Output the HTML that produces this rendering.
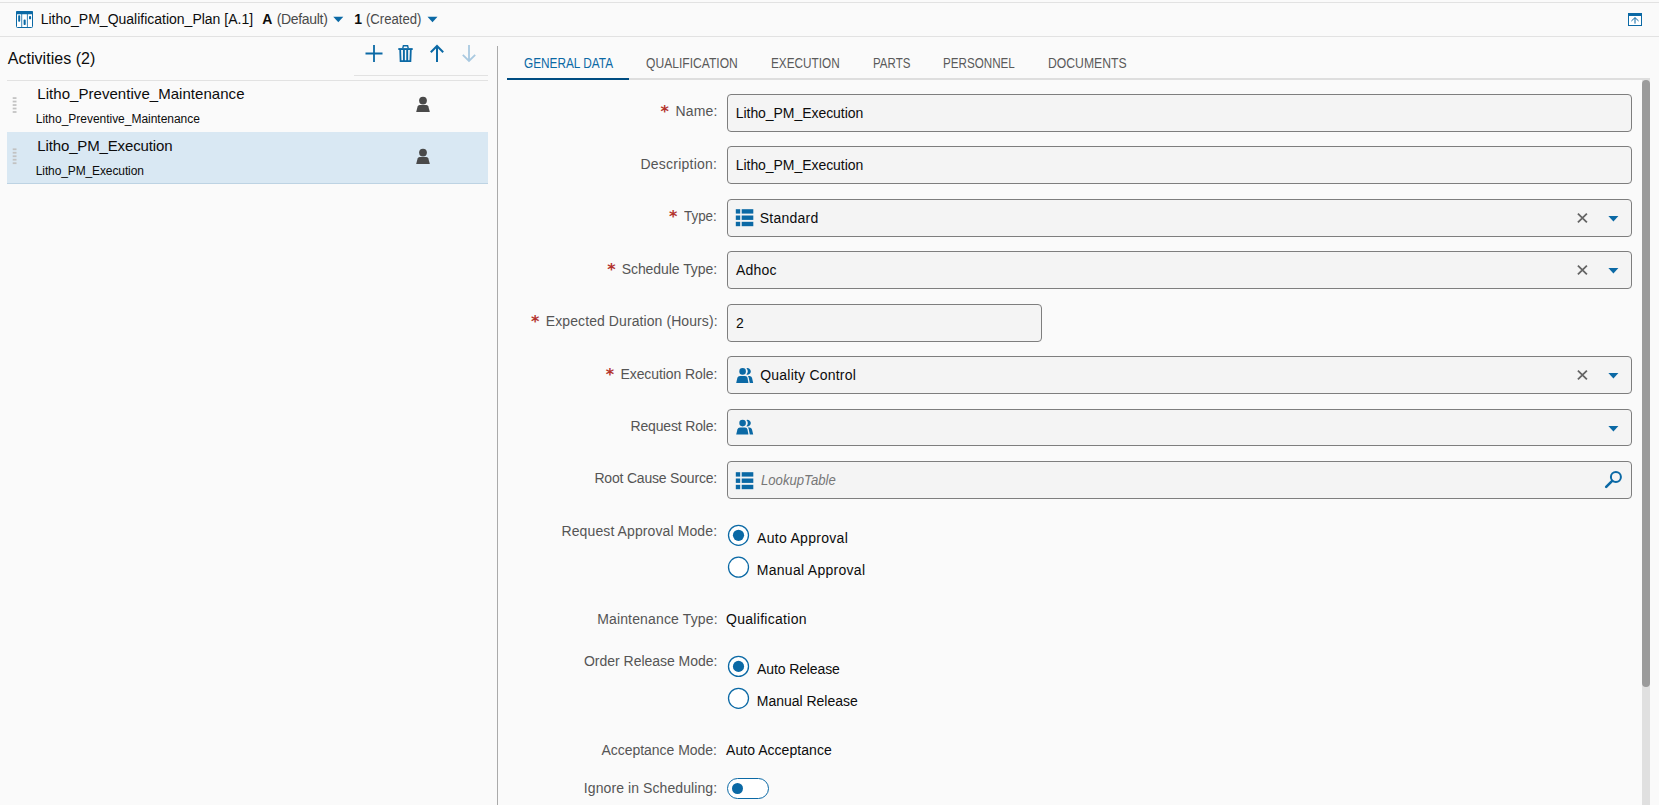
<!DOCTYPE html>
<html lang="en"><head><meta charset="utf-8"><title>Litho_PM_Qualification_Plan</title>
<style>
html,body{margin:0;padding:0;}
body{width:1659px;height:805px;overflow:hidden;background:#fafafa;position:relative;font-family:"Liberation Sans", sans-serif;}
.t{position:absolute;white-space:nowrap;line-height:20px;transform-origin:0 50%;}
.a{position:absolute;}
.in{position:absolute;box-sizing:border-box;height:38px;border:1px solid #7e7e7e;border-radius:4px;background:#f4f4f4;}
svg{position:absolute;overflow:visible;}
</style></head>
<body>
<div class="a" style="left:0;top:2px;width:1659px;height:1px;background:#e2e2e2"></div>
<div class="a" style="left:0;top:36px;width:1659px;height:1px;background:#e2e2e2"></div>
<svg style="left:16px;top:11px" width="17" height="17" viewBox="0.000 0.000 17.000 17.000">
<rect x="0.5" y="0.5" width="16" height="16" rx="1" fill="#fff" stroke="#0b69a5" stroke-width="1"/>
<rect x="0" y="0" width="17" height="3.2" rx="1" fill="#0b69a5"/>
<rect x="5.2" y="3" width="1" height="13.5" fill="#0b69a5" opacity=".8"/>
<rect x="10.9" y="3" width="1" height="13.5" fill="#0b69a5" opacity=".8"/>
<rect x="2.2" y="4.2" width="2" height="6.6" rx=".8" fill="#0b69a5"/>
<rect x="7.6" y="8.6" width="2.1" height="5.4" rx=".8" fill="#0b69a5"/>
<rect x="13" y="5" width="2.1" height="3.3" rx=".9" fill="#0b69a5"/>
</svg>
<svg style="left:333px;top:16px" width="11" height="7" viewBox="-0.300 -0.850 11.000 7.000"><path d="M0 0H10L5 5.5Z" fill="#0b69a5"/></svg>
<svg style="left:427px;top:16px" width="11" height="7" viewBox="-0.500 -0.850 11.000 7.000"><path d="M0 0H10L5 5.5Z" fill="#0b69a5"/></svg>
<svg style="left:1628px;top:13px" width="14" height="13" viewBox="0.000 0.000 14.000 13.000">
<rect x="0.5" y="0.5" width="13" height="12" fill="#fff" stroke="#0b69a5" stroke-width="1"/>
<rect x="0" y="0" width="14" height="3" fill="#0b69a5"/>
<path d="M7 10.6V4.8M3.4 8L7 4.6L10.6 8" fill="none" stroke="#0b69a5" stroke-width="1"/>
</svg>
<svg style="left:365px;top:45px" width="18" height="17" viewBox="-0.500 0.000 18.000 17.000"><path d="M8.5 0V17M0 8.5H17" stroke="#0b69a5" stroke-width="1.8" fill="none"/></svg>
<svg style="left:398px;top:45px" width="15" height="17" viewBox="0.000 0.000 15.000 17.000">
<path d="M4.8 3.2L5.4 0.8H9.6L10.2 3.2" fill="none" stroke="#0b69a5" stroke-width="1.4"/>
<rect x="0.3" y="3.1" width="14.4" height="1.9" fill="#0b69a5"/>
<path d="M2.2 5L2.6 16.1H12.4L12.8 5" fill="none" stroke="#0b69a5" stroke-width="1.8"/>
<path d="M5.9 5V16M9.2 5V16" fill="none" stroke="#0b69a5" stroke-width="1.9"/>
</svg>
<svg style="left:430px;top:45px" width="14" height="17" viewBox="0.000 0.000 14.000 17.000"><path d="M7 17V1.2M0.8 7.2L7 1L13.2 7.2" stroke="#0b69a5" stroke-width="2" fill="none"/></svg>
<svg style="left:462px;top:45px" width="14" height="17" viewBox="0.000 0.000 14.000 17.000"><path d="M7 0V15.8M0.8 9.8L7 16L13.2 9.8" stroke="#a9c9e0" stroke-width="1.8" fill="none"/></svg>
<div class="a" style="left:354px;top:75px;width:134px;height:1px;background:#e2e2e2"></div>
<div class="a" style="left:7px;top:80px;width:481px;height:1px;background:#e2e2e2"></div>
<div class="a" style="left:497px;top:46px;width:1px;height:759px;background:#aaaaaa"></div>
<div class="a" style="left:7px;top:132px;width:481px;height:51px;background:#d9e8f3;border-bottom:1px solid #bdd3e3"></div>
<svg style="left:12px;top:97px" width="5" height="17" viewBox="-0.700 -0.200 5.000 17.000"><rect x="0" y="0.00" width="3.8" height="1.75" fill="#c2c2c2"/><rect x="0" y="3.48" width="3.8" height="1.75" fill="#c2c2c2"/><rect x="0" y="6.96" width="3.8" height="1.75" fill="#c2c2c2"/><rect x="0" y="10.44" width="3.8" height="1.75" fill="#c2c2c2"/><rect x="0" y="13.92" width="3.8" height="1.75" fill="#c2c2c2"/></svg>
<svg style="left:12px;top:148px" width="5" height="17" viewBox="-0.700 -0.400 5.000 17.000"><rect x="0" y="0.00" width="3.8" height="1.75" fill="#c2c2c2"/><rect x="0" y="3.48" width="3.8" height="1.75" fill="#c2c2c2"/><rect x="0" y="6.96" width="3.8" height="1.75" fill="#c2c2c2"/><rect x="0" y="10.44" width="3.8" height="1.75" fill="#c2c2c2"/><rect x="0" y="13.92" width="3.8" height="1.75" fill="#c2c2c2"/></svg>
<svg style="left:416px;top:96px" width="14" height="16" viewBox="0.000 0.000 14.000 16.000">
<circle cx="7" cy="4.6" r="3.9" fill="#4a4a4a"/>
<path d="M0.2 16L1.6 10.6Q2 9.1 3.6 9.1H10.4Q12 9.1 12.4 10.6L13.8 16Z" fill="#4a4a4a"/></svg>
<svg style="left:416px;top:148px" width="14" height="16" viewBox="0.000 0.000 14.000 16.000">
<circle cx="7" cy="4.6" r="3.9" fill="#4a4a4a"/>
<path d="M0.2 16L1.6 10.6Q2 9.1 3.6 9.1H10.4Q12 9.1 12.4 10.6L13.8 16Z" fill="#4a4a4a"/></svg>
<div class="a" style="left:507px;top:78px;width:1143px;height:2px;background:#dedede"></div>
<div class="a" style="left:507px;top:78px;width:122px;height:2px;background:#004c81"></div>
<div class="a" style="left:1642px;top:80px;width:8px;height:725px;background:#e0e0e0"></div>
<div class="a" style="left:1642px;top:80px;width:8px;height:607px;background:#9b9b9b;border-radius:4px"></div>
<div class="in" style="left:727px;top:94px;width:905px"></div>
<div class="in" style="left:727px;top:146px;width:905px"></div>
<div class="in" style="left:727px;top:199px;width:905px"></div>
<div class="in" style="left:727px;top:251px;width:905px"></div>
<div class="in" style="left:727px;top:304px;width:315px"></div>
<div class="in" style="left:727px;top:356px;width:905px"></div>
<div class="in" style="left:727px;top:409px;width:905px;height:37px"></div>
<div class="in" style="left:727px;top:461px;width:905px"></div>
<svg style="left:735px;top:209px" width="19" height="18" viewBox="-0.800 -0.200 19.000 18.000"><rect x="0" y="0.0" width="4.4" height="4.4" fill="#0b69a5"/><rect x="5.9" y="0.0" width="11.6" height="4.4" fill="#0b69a5"/><rect x="0" y="6.3" width="4.4" height="4.4" fill="#0b69a5"/><rect x="5.9" y="6.3" width="11.6" height="4.4" fill="#0b69a5"/><rect x="0" y="12.6" width="4.4" height="4.4" fill="#0b69a5"/><rect x="5.9" y="12.6" width="11.6" height="4.4" fill="#0b69a5"/></svg>
<svg style="left:735px;top:472px" width="19" height="18" viewBox="-0.800 -0.200 19.000 18.000"><rect x="0" y="0.0" width="4.4" height="4.4" fill="#0b69a5"/><rect x="5.9" y="0.0" width="11.6" height="4.4" fill="#0b69a5"/><rect x="0" y="6.3" width="4.4" height="4.4" fill="#0b69a5"/><rect x="5.9" y="6.3" width="11.6" height="4.4" fill="#0b69a5"/><rect x="0" y="12.6" width="4.4" height="4.4" fill="#0b69a5"/><rect x="5.9" y="12.6" width="11.6" height="4.4" fill="#0b69a5"/></svg>
<svg style="left:736px;top:368px" width="18" height="15" viewBox="-0.200 0.000 18.000 15.000">
<path d="M10.2 0.3A3.3 3.3 0 1 1 10.2 6.5A4.6 4.6 0 0 0 10.2 0.3Z" fill="#0b69a5"/>
<path d="M11.6 7.9H13.2Q15.3 7.9 15.8 9.8L17 14.9H13.6L12.6 9.9Q12.3 8.6 11.6 7.9Z" fill="#0b69a5"/>
<circle cx="6.4" cy="3.4" r="3.3" fill="#0b69a5"/>
<path d="M0 14.9L1.2 9.8Q1.7 7.9 3.8 7.9H8.8Q10.9 7.9 11.3 9.8L12.2 14.9Z" fill="#0b69a5"/></svg>
<svg style="left:736px;top:419px" width="18" height="16" viewBox="-0.200 -0.700 18.000 16.000">
<path d="M10.2 0.3A3.3 3.3 0 1 1 10.2 6.5A4.6 4.6 0 0 0 10.2 0.3Z" fill="#0b69a5"/>
<path d="M11.6 7.9H13.2Q15.3 7.9 15.8 9.8L17 14.9H13.6L12.6 9.9Q12.3 8.6 11.6 7.9Z" fill="#0b69a5"/>
<circle cx="6.4" cy="3.4" r="3.3" fill="#0b69a5"/>
<path d="M0 14.9L1.2 9.8Q1.7 7.9 3.8 7.9H8.8Q10.9 7.9 11.3 9.8L12.2 14.9Z" fill="#0b69a5"/></svg>
<svg style="left:1577px;top:213px" width="11" height="10" viewBox="-0.400 -0.300 11.000 10.000"><path d="M0.5 0.4L9.5 9M9.5 0.4L0.5 9" stroke="#646464" stroke-width="1.8" fill="none"/></svg>
<svg style="left:1577px;top:265px" width="11" height="10" viewBox="-0.400 -0.300 11.000 10.000"><path d="M0.5 0.4L9.5 9M9.5 0.4L0.5 9" stroke="#646464" stroke-width="1.8" fill="none"/></svg>
<svg style="left:1577px;top:370px" width="11" height="10" viewBox="-0.400 -0.300 11.000 10.000"><path d="M0.5 0.4L9.5 9M9.5 0.4L0.5 9" stroke="#646464" stroke-width="1.8" fill="none"/></svg>
<svg style="left:1608px;top:215px" width="11" height="7" viewBox="-0.400 -0.950 11.000 7.000"><path d="M0 0H10L5 5.5Z" fill="#0b69a5"/></svg>
<svg style="left:1608px;top:267px" width="11" height="7" viewBox="-0.400 -0.950 11.000 7.000"><path d="M0 0H10L5 5.5Z" fill="#0b69a5"/></svg>
<svg style="left:1608px;top:372px" width="11" height="7" viewBox="-0.400 -0.950 11.000 7.000"><path d="M0 0H10L5 5.5Z" fill="#0b69a5"/></svg>
<svg style="left:1608px;top:425px" width="11" height="7" viewBox="-0.400 -0.950 11.000 7.000"><path d="M0 0H10L5 5.5Z" fill="#0b69a5"/></svg>
<svg style="left:1605px;top:471px" width="17" height="17" viewBox="0.000 0.000 17.000 17.000">
<circle cx="10.9" cy="6.1" r="5" fill="none" stroke="#0b69a5" stroke-width="2"/>
<path d="M7.2 9.8L1.2 15.8" stroke="#0b69a5" stroke-width="2.6" stroke-linecap="round" fill="none"/></svg>
<svg style="left:727px;top:524px" width="23" height="23" viewBox="-11.500 -11.300 23.000 23.000"><circle r="10" fill="#fff" stroke="#0b69a5" stroke-width="1.3"/><circle r="5.6" fill="#0b69a5"/></svg>
<svg style="left:727px;top:556px" width="23" height="23" viewBox="-11.500 -11.200 23.000 23.000"><circle r="10" fill="#fff" stroke="#0b69a5" stroke-width="1.3"/></svg>
<svg style="left:727px;top:655px" width="23" height="23" viewBox="-11.500 -11.400 23.000 23.000"><circle r="10" fill="#fff" stroke="#0b69a5" stroke-width="1.3"/><circle r="5.6" fill="#0b69a5"/></svg>
<svg style="left:727px;top:687px" width="23" height="23" viewBox="-11.500 -11.300 23.000 23.000"><circle r="10" fill="#fff" stroke="#0b69a5" stroke-width="1.3"/></svg>
<div class="a" style="left:727px;top:778px;width:42px;height:21px;box-sizing:border-box;border:1.5px solid #0b69a5;border-radius:11px;background:#fff"></div>
<div class="a" style="left:732px;top:783px;width:11px;height:11px;border-radius:50%;background:#0b69a5"></div>
<span class="t" style="left:660.57px;top:102px;font-size:16px;font-family:'DejaVu Sans', 'Liberation Sans', sans-serif;font-weight:bold;color:#b3322c">*</span>
<span class="t" style="left:668.97px;top:207px;font-size:16px;font-family:'DejaVu Sans', 'Liberation Sans', sans-serif;font-weight:bold;color:#b3322c">*</span>
<span class="t" style="left:607.27px;top:260px;font-size:16px;font-family:'DejaVu Sans', 'Liberation Sans', sans-serif;font-weight:bold;color:#b3322c">*</span>
<span class="t" style="left:531.07px;top:312px;font-size:16px;font-family:'DejaVu Sans', 'Liberation Sans', sans-serif;font-weight:bold;color:#b3322c">*</span>
<span class="t" style="left:605.67px;top:365px;font-size:16px;font-family:'DejaVu Sans', 'Liberation Sans', sans-serif;font-weight:bold;color:#b3322c">*</span>
<span class="t" style="left:40.74px;top:9px;font-size:14px;color:#0c0c0c;letter-spacing:-0.004px;">Litho_PM_Qualification_Plan [A.1]</span>
<span class="t" style="left:262.25px;top:9px;font-size:14px;color:#0c0c0c;font-weight:bold;letter-spacing:0.000px;">A</span>
<span class="t" style="left:276.71px;top:9px;font-size:14px;color:#4a4a4a;letter-spacing:-0.320px;">(Default)</span>
<span class="t" style="left:354.17px;top:9px;font-size:14px;color:#0c0c0c;font-weight:bold;letter-spacing:0.000px;">1</span>
<span class="t" style="left:366.16px;top:9px;font-size:14px;color:#4a4a4a;transform:scaleX(0.9375);">(Created)</span>
<span class="t" style="left:7.75px;top:49px;font-size:16px;color:#0c0c0c;letter-spacing:0.039px;">Activities (2)</span>
<span class="t" style="left:37.35px;top:84px;font-size:15px;color:#0c0c0c;letter-spacing:0.043px;">Litho_Preventive_Maintenance</span>
<span class="t" style="left:35.78px;top:109px;font-size:12px;color:#0c0c0c;letter-spacing:-0.024px;">Litho_Preventive_Maintenance</span>
<span class="t" style="left:37.35px;top:136px;font-size:15px;color:#0c0c0c;letter-spacing:-0.144px;">Litho_PM_Execution</span>
<span class="t" style="left:35.78px;top:161px;font-size:12px;color:#0c0c0c;letter-spacing:-0.115px;">Litho_PM_Execution</span>
<span class="t" style="left:523.65px;top:53px;font-size:14px;color:#0b69a5;transform:scaleX(0.8433);">GENERAL DATA</span>
<span class="t" style="left:646.28px;top:53px;font-size:14px;color:#5a5a5a;transform:scaleX(0.8636);">QUALIFICATION</span>
<span class="t" style="left:771.24px;top:53px;font-size:14px;color:#5a5a5a;transform:scaleX(0.8417);">EXECUTION</span>
<span class="t" style="left:872.56px;top:53px;font-size:14px;color:#5a5a5a;transform:scaleX(0.8242);">PARTS</span>
<span class="t" style="left:942.84px;top:53px;font-size:14px;color:#5a5a5a;transform:scaleX(0.8314);">PERSONNEL</span>
<span class="t" style="left:1048.22px;top:53px;font-size:14px;color:#5a5a5a;transform:scaleX(0.8713);">DOCUMENTS</span>
<span class="t" style="left:675.46px;top:101px;font-size:14px;color:#555555;letter-spacing:0.188px;">Name:</span>
<span class="t" style="left:640.46px;top:154px;font-size:14px;color:#555555;letter-spacing:0.232px;">Description:</span>
<span class="t" style="left:684.42px;top:206px;font-size:14px;color:#555555;transform:scaleX(0.9573);">Type:</span>
<span class="t" style="left:621.67px;top:259px;font-size:14px;color:#555555;letter-spacing:-0.058px;">Schedule Type:</span>
<span class="t" style="left:545.85px;top:311px;font-size:14px;color:#555555;letter-spacing:0.082px;">Expected Duration (Hours):</span>
<span class="t" style="left:620.46px;top:364px;font-size:14px;color:#555555;letter-spacing:-0.075px;">Execution Role:</span>
<span class="t" style="left:630.46px;top:416px;font-size:14px;color:#555555;letter-spacing:-0.162px;">Request Role:</span>
<span class="t" style="left:594.46px;top:468px;font-size:14px;color:#555555;letter-spacing:-0.197px;">Root Cause Source:</span>
<span class="t" style="left:561.53px;top:521px;font-size:14px;color:#555555;letter-spacing:0.104px;">Request Approval Mode:</span>
<span class="t" style="left:597.21px;top:609px;font-size:14px;color:#555555;letter-spacing:0.144px;">Maintenance Type:</span>
<span class="t" style="left:584.00px;top:651px;font-size:14px;color:#555555;letter-spacing:-0.022px;">Order Release Mode:</span>
<span class="t" style="left:601.54px;top:740px;font-size:14px;color:#555555;letter-spacing:-0.035px;">Acceptance Mode:</span>
<span class="t" style="left:583.81px;top:778px;font-size:14px;color:#555555;letter-spacing:0.090px;">Ignore in Scheduling:</span>
<span class="t" style="left:735.78px;top:103px;font-size:14px;color:#0c0c0c;letter-spacing:-0.054px;">Litho_PM_Execution</span>
<span class="t" style="left:735.78px;top:155px;font-size:14px;color:#0c0c0c;letter-spacing:-0.054px;">Litho_PM_Execution</span>
<span class="t" style="left:759.78px;top:208px;font-size:14px;color:#0c0c0c;letter-spacing:0.239px;">Standard</span>
<span class="t" style="left:736.00px;top:260px;font-size:14px;color:#0c0c0c;letter-spacing:0.225px;">Adhoc</span>
<span class="t" style="left:736.03px;top:313px;font-size:14px;color:#0c0c0c;letter-spacing:0.000px;">2</span>
<span class="t" style="left:760.28px;top:365px;font-size:14px;color:#0c0c0c;letter-spacing:0.211px;">Quality Control</span>
<span class="t" style="left:760.84px;top:470px;font-size:14px;color:#777;font-style:italic;transform:scaleX(0.9381);">LookupTable</span>
<span class="t" style="left:757.00px;top:528px;font-size:14px;color:#0c0c0c;letter-spacing:0.300px;">Auto Approval</span>
<span class="t" style="left:756.74px;top:560px;font-size:14px;color:#0c0c0c;letter-spacing:0.286px;">Manual Approval</span>
<span class="t" style="left:726.00px;top:609px;font-size:14px;color:#0c0c0c;letter-spacing:0.290px;">Qualification</span>
<span class="t" style="left:757.00px;top:659px;font-size:14px;color:#0c0c0c;letter-spacing:-0.105px;">Auto Release</span>
<span class="t" style="left:756.74px;top:691px;font-size:14px;color:#0c0c0c;letter-spacing:-0.008px;">Manual Release</span>
<span class="t" style="left:726.00px;top:740px;font-size:14px;color:#0c0c0c;letter-spacing:0.046px;">Auto Acceptance</span>
</body></html>
